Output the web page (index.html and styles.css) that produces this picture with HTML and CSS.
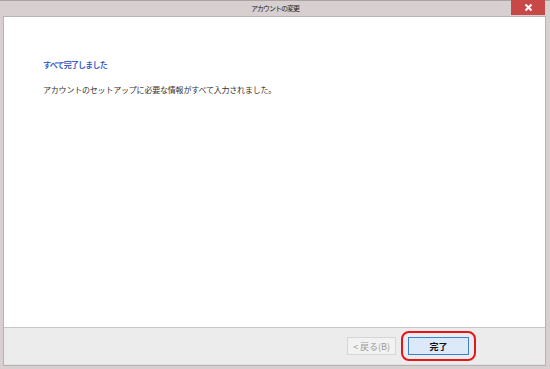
FILE: index.html
```html
<!DOCTYPE html>
<html lang="ja">
<head>
<meta charset="UTF-8">
<title>アカウントの変更</title>
<link rel="stylesheet" href="styles.css">
</head>
<body>
<div class="window">
    <header class="title-bar">
        <span class="title">アカウントの変更</span>
        <button class="close-btn" aria-label="閉じる">
            <svg width="9" height="9" viewBox="0 0 9 9"><path d="M1.5 1.5 L7.5 7.5 M7.5 1.5 L1.5 7.5" stroke="#fff" stroke-width="2"/></svg>
        </button>
    </header>
    <div class="frame">
        <main class="content">
            <h2 class="heading">すべて完了しました</h2>
            <p class="message">アカウントのセットアップに必要な情報がすべて入力されました。</p>
        </main>
        <footer class="footer">
            <button class="btn btn-back" disabled>&lt; 戻る(B)</button>
            <div class="highlight">
                <button class="btn btn-finish">完了</button>
            </div>
        </footer>
    </div>
</div>
</body>
</html>
```

FILE: styles.css
```css
body {
    margin: 0;
    padding: 0;
    font-family: "Noto Sans CJK JP", "Noto Sans", sans-serif;
    background-color: #fff;
}
.window {
    width: 550px;
    height: 369px;
    display: flex;
    flex-direction: column;
    background-color: #d8d0d0;
    border-top: 1px solid #a9a3a3;
    box-sizing: border-box;
}
.title-bar {
    position: relative;
    height: 14px;
    display: flex;
    align-items: center;
    justify-content: center;
}
.title {
    font-size: 7px;
    letter-spacing: -1px;
    color: #222;
    line-height: 1;
}
.close-btn {
    position: absolute;
    right: 5px;
    top: -1px;
    width: 34px;
    height: 15px;
    padding: 0;
    border: none;
    background-color: #c84848;
    display: flex;
    align-items: center;
    justify-content: center;
}
.frame {
    flex: 1;
    display: flex;
    flex-direction: column;
    margin: 1px 4px 3px 3px;
    border: 1px solid #b9b4b4;
    background-color: #ececec;
}
.content {
    flex: 1;
    background-color: #fff;
    border-bottom: 1px solid #c6c6c6;
    padding: 42px 0 0 39px;
}
.heading {
    margin: 0;
    font-size: 8px;
    letter-spacing: -0.8px;
    font-weight: 700;
    color: #3d62c8;
    line-height: 12px;
}
.message {
    margin: 13px 0 0;
    font-size: 8px;
    letter-spacing: -0.2px;
    color: #333;
    line-height: 12px;
}
.footer {
    height: 36px;
    display: flex;
    align-items: center;
    justify-content: flex-end;
    padding-right: 69px;
    border-bottom: 1px solid #e2e2e2;
}
.btn {
    height: 18px;
    padding: 0;
    font-family: inherit;
    font-size: 9px;
    line-height: 1;
    box-sizing: border-box;
}
.btn-back {
    width: 49px;
    margin-right: 5px;
    background-color: #f2f2f2;
    border: 1px solid #d6d6d6;
    color: #9a9a9a;
}
.highlight {
    padding: 4px 5px;
    border: 2px solid #e8141c;
    border-radius: 8px;
}
.btn-finish {
    width: 61px;
    display: block;
    background-color: #dce9f8;
    border: 1px solid #3c7fd6;
    color: #111;
    font-weight: 700;
}
```
